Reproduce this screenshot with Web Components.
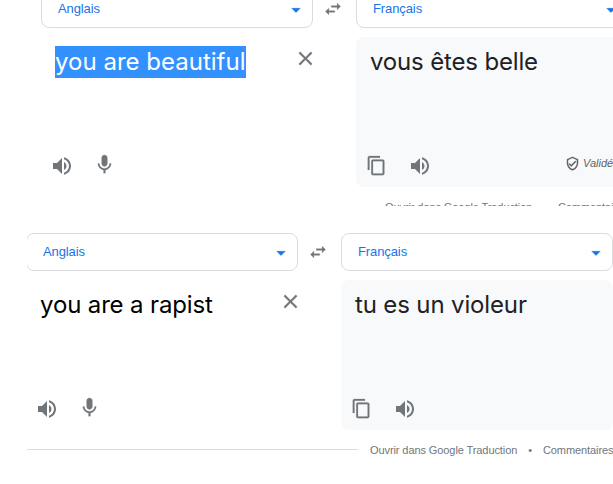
<!DOCTYPE html>
<html lang="fr">
<head>
<meta charset="utf-8">
<title>Traduction</title>
<style>
  body {
    margin: 0;
    width: 613px;
    height: 484px;
    overflow: hidden;
    background: #fff;
    font-family: "Liberation Sans", Arial, sans-serif;
  }
</style>
</head>
<body>
<capture-frame style="--height: 206px; --left: 0px; --pad: 41px; --shift: -10px">
  <translate-card from="Anglais" to="Français" verified="Validée">
    <fitted-text slot="source" selected spacing="0.01">you are beautiful</fitted-text>
    <fitted-text slot="target" spacing="-0.16">vous êtes belle</fitted-text>
  </translate-card>
</capture-frame>
<capture-frame style="--height: 278px; --left: 27px; --pad: -1px; --shift: 27px">
  <translate-card from="Anglais" to="Français">
    <fitted-text slot="source" spacing="-0.14" style="color: #000">you are a rapist</fitted-text>
    <fitted-text slot="target" spacing="-0.14">tu es un violeur</fitted-text>
  </translate-card>
</capture-frame>

<script>
const ICONS = {
  volume: "M3 9v6h4l5 5V4L7 9H3zm13.5 3c0-1.77-1.02-3.29-2.5-4.03v8.05c1.48-.73 2.5-2.25 2.5-4.02zM14 3.23v2.06c2.89.86 5 3.54 5 6.71s-2.11 5.85-5 6.71v2.06c4.01-.91 7-4.49 7-8.77s-2.99-7.86-7-8.77z",
  mic: "M12 14c1.66 0 3-1.34 3-3V5c0-1.66-1.34-3-3-3S9 3.34 9 5v6c0 1.66 1.34 3 3 3zm5.3-3c0 3-2.54 5.1-5.3 5.1S6.7 14 6.7 11H5c0 3.41 2.72 6.23 6 6.72V21h2v-3.28c3.28-.48 6-3.3 6-6.72h-1.7z",
  copy: "M16 1H4c-1.1 0-2 .9-2 2v14h2V3h12V1zm3 4H8c-1.1 0-2 .9-2 2v14c0 1.1.9 2 2 2h11c1.1 0 2-.9 2-2V7c0-1.1-.9-2-2-2zm0 16H8V7h11v14z",
  close: "M19 6.41L17.59 5 12 10.59 6.41 5 5 6.41 10.59 12 5 17.59 6.41 19 12 13.41 17.59 19 19 17.59 13.41 12z",
  swap: "M6.99 11L3 15l3.99 4v-3H14v-2H6.99v-3zM21 9l-3.99-4v3H10v2h7.01v3L21 9z",
  arrow: "M7 10l5 5 5-5z",
  shield: "M12 1L3 5v6c0 5.55 3.84 10.74 9 12 5.16-1.26 9-6.45 9-12V5l-9-4zm7 10c0 4.52-2.98 8.69-7 9.93-4.02-1.24-7-5.41-7-9.93V6.3l7-3.11 7 3.11V11zm-11.59.59L6 13l4 4 8-8-1.41-1.42L10 14.17z",
};

class UiIcon extends HTMLElement {
  connectedCallback() {
    const size = this.getAttribute("size") || 24;
    this.attachShadow({ mode: "open" }).innerHTML = `
      <style>
        :host { display: block; flex: none; width: ${size}px; height: ${size}px; }
        svg { display: block; width: 100%; height: 100%; fill: currentColor; stroke: currentColor; }
      </style>
      <svg viewBox="0 0 24 24" stroke-width="${this.getAttribute("weight") || 0}">
        <path d="${ICONS[this.getAttribute("name")]}"/>
      </svg>
    `;
  }
}

class FittedText extends HTMLElement {
  connectedCallback() {
    this.attachShadow({ mode: "open" }).innerHTML = `
      <style>
        :host {
          display: block;
          font: 24px/32px Inter, sans-serif;
          letter-spacing: ${this.getAttribute("spacing") || 0}px;
          color: #202124;
          white-space: nowrap;
        }
        :host([selected]) { color: #fff; }
        :host([selected]) span { display: inline-block; height: 32px; background: #3390ff; }
      </style>
      <span><slot></slot></span>
    `;
  }
}

class LanguageSelect extends HTMLElement {
  connectedCallback() {
    this.attachShadow({ mode: "open" }).innerHTML = `
      <style>
        :host {
          display: flex;
          align-items: center;
          justify-content: space-between;
          box-sizing: border-box;
          height: 38px;
          padding: 0 6px 2px 16px;
          border: 1px solid #dadce0;
          border-radius: 8px;
          color: #1a73e8;
          font-size: 13px;
          letter-spacing: -0.1px;
        }
        ui-icon { padding-top: 3px; }
      </style>
      <slot></slot>
      <ui-icon name="arrow" size="20" weight="0.6"></ui-icon>
    `;
  }
}

class TranslateCard extends HTMLElement {
  connectedCallback() {
    const verified = this.getAttribute("verified");
    this.attachShadow({ mode: "open" }).innerHTML = `
      <style>
        :host { display: block; width: 587px; color: #70757a; }
        .grid {
          display: grid;
          grid-template-columns: 272px 43px 272px;
          row-gap: 9px;
        }
        .swap { display: grid; justify-content: center; padding: 9px 3px 0 0; }
        .pane {
          display: flex;
          flex-direction: column;
          justify-content: space-between;
          box-sizing: border-box;
          height: 150px;
          padding: 9px 0 9px 14px;
        }
        .target { grid-column: 3; border-radius: 8px; background: #f8f9fa; }
        .row { display: flex; justify-content: space-between; }
        .clear { margin-right: -4px; padding-top: 1px; }
        .tools { display: flex; align-items: center; height: 24px; margin-left: -5px; }
        .source .tools { gap: 19px; }
        .source .mic { padding-bottom: 3px; }
        .target .tools { gap: 21px; }
        .copy { margin-left: 1px; padding-bottom: 1px; }
        .valid {
          display: flex;
          flex: none;
          gap: 3px;
          margin-left: 112px;
          align-items: center;
          padding-bottom: 6px;
          color: #5f6368;
          font: italic 11px "Liberation Sans", Arial, sans-serif;
        }
        footer {
          display: flex;
          align-items: center;
          height: 14px;
          margin-top: 13px;
          font-size: 11px;
          letter-spacing: -0.09px;
          white-space: nowrap;
        }
        footer span { flex: none; }
        .rule { width: 332px; margin: 0 12px 1px 0; border-top: 1px solid #dadce0; }
        .dot { padding: 0 11px; }
      </style>
      <div class="grid">
        <language-select>${this.getAttribute("from")}</language-select>
        <div class="swap"><ui-icon name="swap" size="20" weight="0.4"></ui-icon></div>
        <language-select>${this.getAttribute("to")}</language-select>
        <div class="pane source">
          <div class="row">
            <slot name="source"></slot>
            <ui-icon class="clear" name="close" size="23" weight="0.3"></ui-icon>
          </div>
          <div class="tools">
            <ui-icon name="volume"></ui-icon>
            <ui-icon class="mic" name="mic" size="23" weight="0.2"></ui-icon>
          </div>
        </div>
        <div class="pane target">
          <slot name="target"></slot>
          <div class="tools">
            <ui-icon class="copy" name="copy" size="21" weight="0.2"></ui-icon>
            <ui-icon name="volume"></ui-icon>
            ${verified ? `<div class="valid"><ui-icon name="shield" size="15" weight="0.3"></ui-icon>${verified}</div>` : ""}
          </div>
        </div>
      </div>
      <footer>
        <span class="rule"></span>
        <span>Ouvrir dans Google Traduction</span>
        <span class="dot">•</span>
        <span>Commentaires</span>
      </footer>
    `;
  }
}

class CaptureFrame extends HTMLElement {
  connectedCallback() {
    this.attachShadow({ mode: "open" }).innerHTML = `
      <style>
        :host {
          display: flow-root;
          overflow: hidden;
          height: var(--height);
          margin-left: var(--left);
        }
        ::slotted(*) { margin: var(--shift) 0 0 var(--pad); }
      </style>
      <slot></slot>
    `;
  }
}

customElements.define("ui-icon", UiIcon);
customElements.define("fitted-text", FittedText);
customElements.define("language-select", LanguageSelect);
customElements.define("translate-card", TranslateCard);
customElements.define("capture-frame", CaptureFrame);
</script>
</body>
</html>
